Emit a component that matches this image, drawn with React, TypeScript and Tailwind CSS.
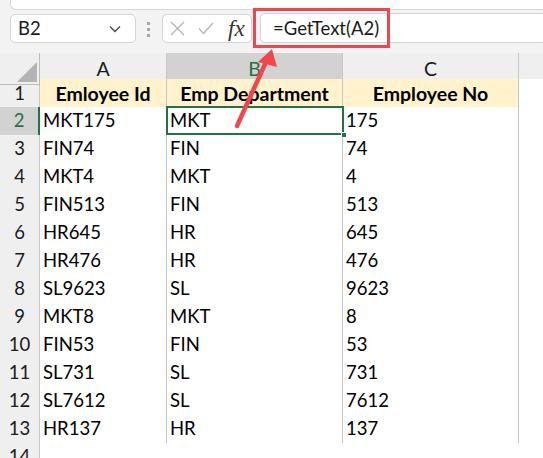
import React from 'react';

const ROWS = [
    ['MKT175', 'MKT', '175'],
    ['FIN74', 'FIN', '74'],
    ['MKT4', 'MKT', '4'],
    ['FIN513', 'FIN', '513'],
    ['HR645', 'HR', '645'],
    ['HR476', 'HR', '476'],
    ['SL9623', 'SL', '9623'],
    ['MKT8', 'MKT', '8'],
    ['FIN53', 'FIN', '53'],
    ['SL731', 'SL', '731'],
    ['SL7612', 'SL', '7612'],
    ['HR137', 'HR', '137'],
];

const font = { fontFamily: 'Lato, "Open Sans", sans-serif' };

function FormulaBar() {
    return (
        <div className="relative h-[53px] bg-[#f3f3f3]">
            {/* ribbon edge */}
            <div className="absolute left-[10px] right-0 top-0 h-[10px] bg-white border-l border-b border-[#d6d6d6] rounded-bl-[6px]" />
            {/* name box */}
            <div className="absolute left-[10px] top-[14px] w-[126px] h-[29px] bg-white border border-[#d4d4d4] rounded-[5px] flex items-center pl-[7px] pr-[14px]">
                <span className="text-[18.5px] text-[#1a1a1a] leading-none flex-1">B2</span>
                <svg width="12" height="8" viewBox="0 0 12 8" fill="none" stroke="#444" strokeWidth="1.3">
                    <path d="M1 1.5 L6 6.5 L11 1.5" />
                </svg>
            </div>
            {/* separator dots */}
            <div className="absolute left-[147px] top-[22px] flex flex-col gap-[3px]">
                <div className="w-[3px] h-[3px] bg-[#a8a8a8]" />
                <div className="w-[3px] h-[3px] bg-[#a8a8a8]" />
                <div className="w-[3px] h-[3px] bg-[#a8a8a8]" />
            </div>
            {/* cancel / enter / fx */}
            <div className="absolute left-[162px] top-[14px] w-[90px] h-[29px] bg-white border border-[#d4d4d4] rounded-[5px] flex items-center">
                <svg className="ml-[7px]" width="15" height="15" viewBox="0 0 15 15" fill="none" stroke="#b5b5b5" strokeWidth="1.4">
                    <path d="M1 1 L14 14 M14 1 L1 14" />
                </svg>
                <svg className="ml-[13px]" width="16" height="13" viewBox="0 0 16 13" fill="none" stroke="#b5b5b5" strokeWidth="1.4">
                    <path d="M1 6.5 L5.5 11.5 L15 1" />
                </svg>
                <span className="ml-[14px] text-[23px] italic text-[#333] leading-none" style={{ fontFamily: '"Liberation Serif", serif' }}>
                    fx
                </span>
            </div>
            {/* formula input */}
            <div className="absolute left-[260px] right-[-4px] top-[13px] h-[30px] bg-white border border-[#d4d4d4] rounded-[5px] flex items-center pl-[12px]">
                <span className="text-[18.5px] text-[#1a1a1a] leading-none">=GetText(A2)</span>
            </div>
            {/* highlight */}
            <div className="absolute left-[253px] top-[8px] w-[137px] h-[40px] border-[3px] border-[#f0474d]" />
        </div>
    );
}

function Grid() {
    const cols = 'grid grid-cols-[40px_127px_176px_176px_24px]';
    return (
        <div className="relative">
            {/* column headers */}
            <div className={`${cols} h-[26px]`}>
                <div className="relative bg-[#efefef] border-r border-b border-[#bdbdbd]">
                    <svg className="absolute right-[2px] bottom-[2px]" width="20" height="20" viewBox="0 0 20 20">
                        <polygon points="20,0 20,20 0,20" fill="#b4b4b4" />
                    </svg>
                </div>
                <div className="bg-[#efefef] border-r border-b border-[#c8c8c8] flex items-center justify-center text-[19.5px] text-[#1a1a1a]">A</div>
                <div className="bg-[#d2d2d2] border-r border-b-2 border-r-[#c8c8c8] border-b-[#217346] flex items-center justify-center text-[19.5px] text-[#217346] pt-[1px]">B</div>
                <div className="bg-[#efefef] border-r border-b border-[#c8c8c8] flex items-center justify-center text-[19.5px] text-[#1a1a1a]">C</div>
                <div className="bg-[#efefef] border-b border-[#c8c8c8]" />
            </div>
            {/* header row */}
            <div className={`${cols} h-[28px]`}>
                <div className="bg-[#efefef] border-r border-b border-[#c8c8c8] flex items-center justify-center text-[18.5px] text-[#1a1a1a]">1</div>
                {['Emloyee Id', 'Emp Department', 'Employee No'].map((h) => (
                    <div key={h} className="bg-[#fff2cc] border-r border-b border-[#c6c6c6] flex items-center justify-center text-[19.5px] font-bold text-black">
                        {h}
                    </div>
                ))}
                <div className="bg-white" />
            </div>
            {ROWS.map((row, i) => {
                const selected = i === 0;
                return (
                    <div key={i} className={`${cols} h-[28px]`}>
                        <div
                            className={
                                selected
                                    ? 'bg-[#d2d2d2] border-r-2 border-b border-r-[#217346] border-b-[#c8c8c8] flex items-center justify-center text-[18.5px] text-[#217346]'
                                    : 'bg-[#efefef] border-r border-b border-[#c8c8c8] flex items-center justify-center text-[18.5px] text-[#1a1a1a]'
                            }
                        >
                            {i + 2}
                        </div>
                        {row.map((v, j) => (
                            <div key={j} className="bg-white border-r border-b border-[#c6c6c6] flex items-center pl-[3px] text-[18.5px] text-black">
                                {v}
                            </div>
                        ))}
                        <div className="bg-white" />
                    </div>
                );
            })}
            <div className={`${cols} h-[28px]`}>
                <div className="bg-[#efefef] border-r border-[#c8c8c8] flex items-center justify-center text-[18.5px] text-[#1a1a1a]">14</div>
                <div className="bg-white col-span-4" />
            </div>
            {/* active cell B2 */}
            <div className="absolute left-[166px] top-[53px] w-[178px] h-[29px] border-2 border-[#217346]">
                <div className="absolute right-[-5px] bottom-[-5px] w-[6px] h-[6px] bg-[#217346] border border-white" />
            </div>
        </div>
    );
}

export default function App() {
    return (
        <div className="relative w-[543px] h-[458px] overflow-hidden bg-white" style={font}>
            <FormulaBar />
            <Grid />
            <svg className="absolute left-0 top-0 pointer-events-none" width="543" height="458">
                <line x1="237" y1="126" x2="266" y2="62" stroke="#f0474d" strokeWidth="4.5" strokeLinecap="round" />
                <polygon points="272,49 277,67 258,62" fill="#f0474d" />
            </svg>
        </div>
    );
}
